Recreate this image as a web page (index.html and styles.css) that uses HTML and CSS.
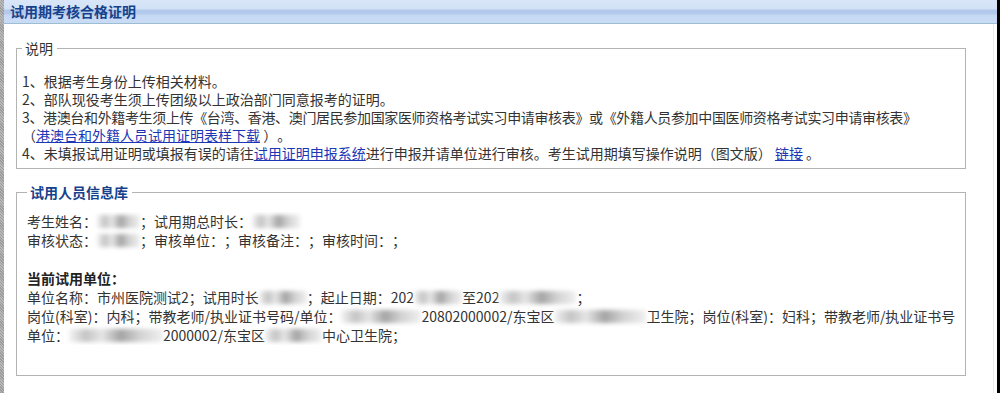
FILE: index.html
```html
<!DOCTYPE html>
<html lang="zh-CN">
<head>
    <meta charset="UTF-8">
    <title>试用期考核合格证明</title>
    <link rel="stylesheet" href="styles.css">
</head>
<body>
    <div class="side-left"></div>
    <div class="page">
        <div class="panel-header">试用期考核合格证明</div>
        <div class="content">
            <fieldset class="box box-notes">
                <legend>说明</legend>
                <p>1、根据考生身份上传相关材料。</p>
                <p>2、部队现役考生须上传团级以上政治部门同意报考的证明。</p>
                <p class="tight">3、港澳台和外籍考生须上传《台湾、香港、澳门居民参加国家医师资格考试实习申请审核表》或《外籍人员参加中国医师资格考试实习申请审核表》</p>
                <p>（<a href="#">港澳台和外籍人员试用证明表样下载</a> ）。</p>
                <p>4、未填报试用证明或填报有误的请往<a href="#">试用证明申报系统</a>进行申报并请单位进行审核。考生试用期填写操作说明（图文版） <a href="#">链接</a> 。</p>
            </fieldset>

            <fieldset class="box box-info">
                <legend>试用人员信息库</legend>
                <div class="info">
                    <p>考生姓名：<span class="mask w43"></span>；试用期总时长：<span class="mask w48"></span></p>
                    <p>审核状态：<span class="mask w43"></span>；审核单位：；审核备注：；审核时间：；</p>
                    <p>&nbsp;</p>
                    <p class="sub-title">当前试用单位：</p>
                    <p>单位名称：市州医院测试2；试用时长<span class="mask w48"></span>；起止日期：202<span class="mask w48"></span>至202<span class="mask w77"></span>；</p>
                    <p>岗位(科室)：内科；带教老师/执业证书号码/单位：<span class="mask w80"></span>20802000002/东宝区<span class="mask w92"></span>卫生院；岗位(科室)：妇科；带教老师/执业证书号码/单位：</p>
                    <p>单位：<span class="mask w94"></span>2000002/东宝区<span class="mask w57"></span>中心卫生院；</p>
                </div>
            </fieldset>
        </div>
    </div>
    <div class="side-right"></div>
</body>
</html>
```

FILE: styles.css
```css
body {
    margin: 0;
    height: 393px;
    overflow: hidden;
    display: flex;
    background-color: #fff;
    color: #333;
    font-family: "Noto Sans CJK SC", "Microsoft YaHei", sans-serif;
    font-size: 14px;
    text-spacing-trim: space-all;
}
.side-left {
    width: 4px;
    flex-shrink: 0;
    background: repeating-linear-gradient(45deg, #9c9c9c 0, #9c9c9c 1px, #b8b8b8 1px, #b8b8b8 2px);
}
.side-right {
    width: 3px;
    flex-shrink: 0;
    background-color: #000;
}
.page {
    flex: 1;
    display: flex;
    flex-direction: column;
    min-width: 0;
}
.panel-header {
    height: 23px;
    line-height: 23px;
    padding-left: 6px;
    border-bottom: 1px solid #9dbdd0;
    background: linear-gradient(to bottom, #d9e6f8 0, #d2e1f6 9px, #b1c8ec 10px, #b4caed 14px, #c6d9f4 15px, #c9dbf5 23px);
    color: #15428b;
    font-weight: bold;
    font-size: 14px;
}
.content {
    flex: 1;
    margin-right: 3px;
    border-right: 1px solid #ececec;
    padding-top: 15px;
}
.box {
    margin: 0 27px 14px 12px;
    border: 1px solid #b3b3b3;
    min-width: 0;
}
.box legend {
    padding: 0 4px 0 3px;
    line-height: 18px;
}
.box p {
    margin: 0;
    white-space: nowrap;
}
.box-notes {
    padding: 15px 5px 6px 5px;
}
.box-notes legend {
    color: #333;
}
.box-notes p {
    line-height: 18px;
}
.box-notes .tight {
    letter-spacing: -0.35px;
}
.box-info {
    padding: 11px 10px 30px 10px;
}
.box-info legend {
    color: #15428b;
    font-weight: bold;
}
.info {
    overflow: hidden;
}
.info p {
    line-height: 19px;
}
.sub-title {
    font-weight: bold;
    color: #222;
}
a {
    color: #1d36b5;
    text-decoration: underline;
}
/* blurred personal data */
.mask {
    display: inline-block;
    height: 13px;
    vertical-align: -1px;
    background: linear-gradient(90deg, #f4f4f4 0, #c4c4c4 18%, #e6e6e6 35%, #a4a4a4 55%, #d2d2d2 75%, #f0f0f0 100%);
    filter: blur(2px);
}
.w43 { width: 43px; }
.w48 { width: 48px; }
.w57 { width: 57px; }
.w77 { width: 77px; }
.w80 { width: 80px; }
.w92 { width: 92px; }
.w94 { width: 94px; }
```
